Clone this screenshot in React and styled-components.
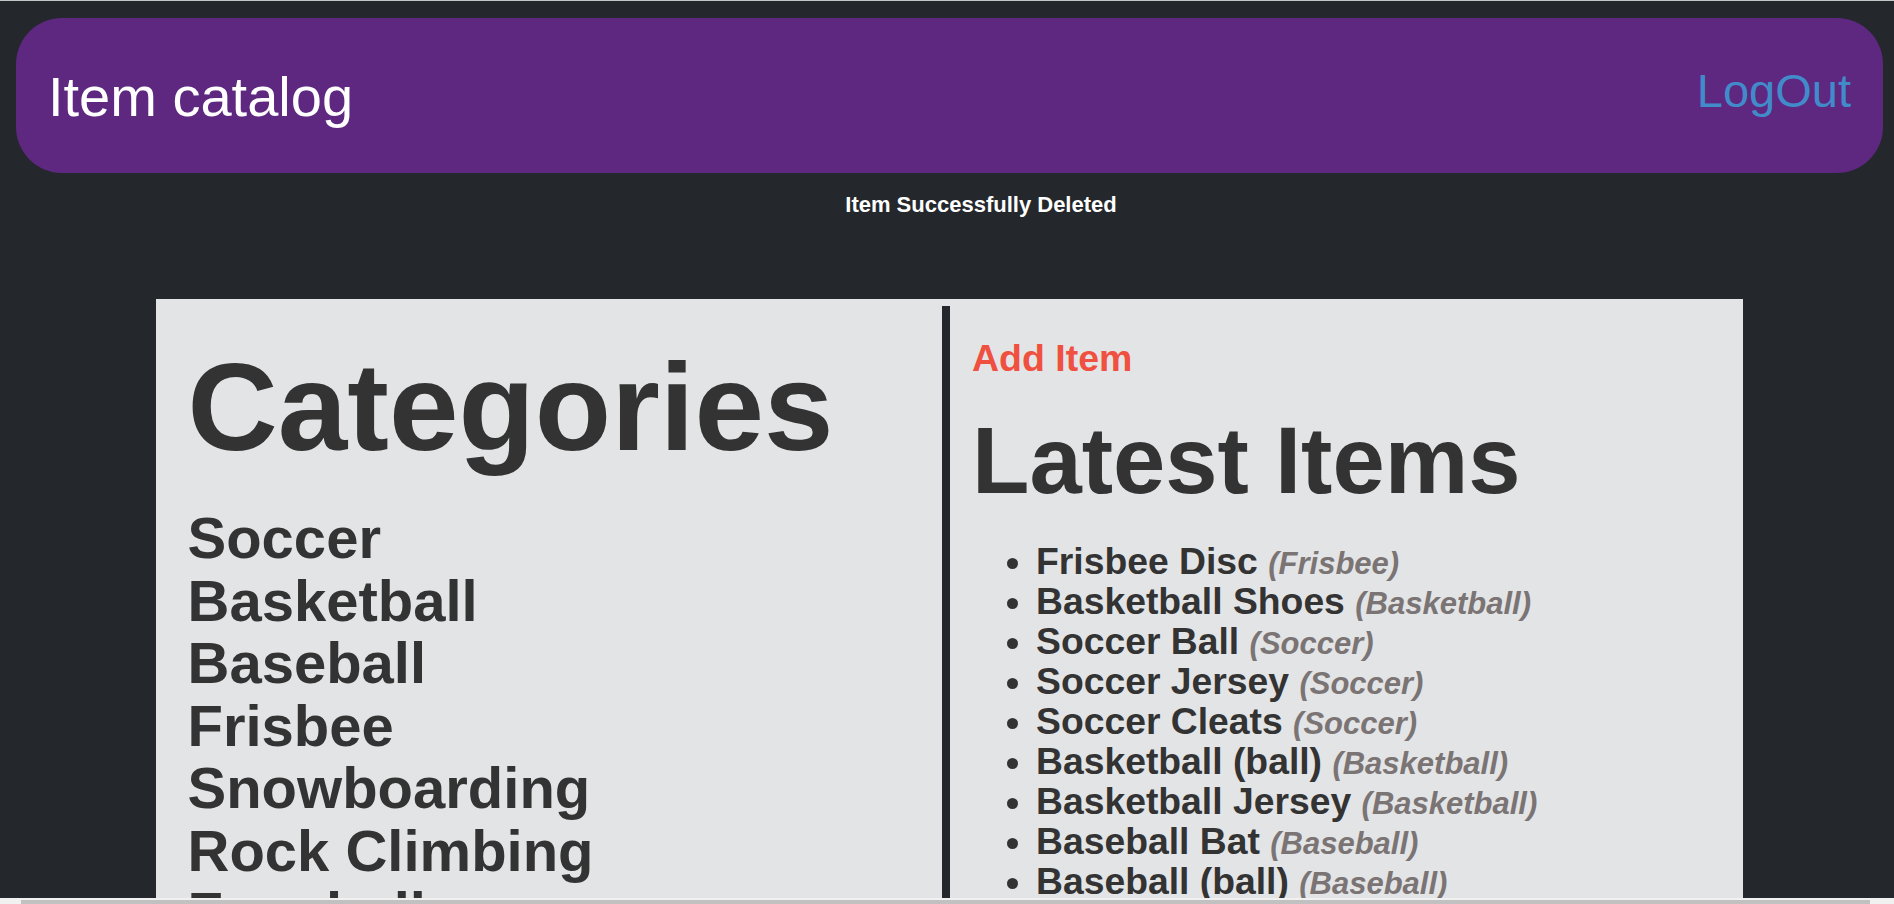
import React from "react";
import styled, { createGlobalStyle } from "styled-components";

const GlobalStyle = createGlobalStyle`
  html, body {
    margin: 0;
    padding: 0;
    background: #24282c;
    overflow: hidden;
  }
  body {
    font-family: "Liberation Sans", Arial, Helvetica, sans-serif;
  }
  * { box-sizing: border-box; }
`;

const Page = styled.div`
  min-height: 904px;
  border-top: 1px solid #c4c6c8;
  padding: 17px 11px 0 16px;
`;

const Header = styled.header`
  height: 155px;
  background: #5e2780;
  border-radius: 46px;
  display: flex;
  align-items: center;
  justify-content: space-between;
  padding: 0 32px 0 32px;
`;

const Brand = styled.div`
  color: #ffffff;
  font-size: 56px;
  line-height: 1;
  margin-top: 2px;
`;

const LogOut = styled.a`
  color: #428bca;
  font-size: 47px;
  line-height: 1;
  text-decoration: none;
  margin-bottom: 10px;
  cursor: pointer;
`;

const Flash = styled.div`
  margin-top: 19px;
  padding-left: 63px;
  text-align: center;
  color: #ffffff;
  font-weight: bold;
  font-size: 22px;
  line-height: 26px;
`;

const Panel = styled.main`
  width: 1587px;
  margin: 81px auto 0;
  background: #e3e4e6;
  padding-top: 7px;
  display: grid;
  grid-template-columns: 1fr 1fr;
  min-height: 700px;
  color: #333333;
`;

const Column = styled.section`
  padding: 31px 0 0 ${(p) => p.$inset}px;
  border-right: ${(p) => (p.$divider ? "8px solid #24282c" : "none")};
`;

const BigTitle = styled.h1`
  margin: 0;
  font-weight: bold;
  font-size: ${(p) => p.$size}px;
  line-height: ${(p) => p.$lh}px;
  margin-top: ${(p) => p.$mt || 0}px;
`;

const CategoryList = styled.div`
  margin-top: 30px;
  display: flex;
  flex-direction: column;
`;

const CategoryLink = styled.a`
  font-weight: bold;
  font-size: 58px;
  line-height: 62.5px;
  color: #333333;
  text-decoration: none;
`;

const AddLink = styled.a`
  display: block;
  color: #f05040;
  font-weight: bold;
  font-size: 37.5px;
  line-height: 42px;
  text-decoration: none;
`;

const ItemList = styled.ul`
  margin: 25.5px 0 0;
  padding-left: 64px;
  list-style: disc;
`;

const Item = styled.li`
  font-weight: bold;
  font-size: 37.3px;
  line-height: 40px;
`;

const ItemCategory = styled.span`
  font-style: italic;
  font-size: 31px;
  line-height: 30px;
  color: #7b7474;
`;

const ScrollTrack = styled.div`
  position: fixed;
  left: 0;
  right: 0;
  bottom: 0;
  height: 6px;
  background: #f1f1f1;
`;

const ScrollThumb = styled.div`
  position: absolute;
  left: 21px;
  right: 24px;
  top: 2px;
  bottom: 0;
  background: #c1c1c1;
`;

const categories = [
  "Soccer",
  "Basketball",
  "Baseball",
  "Frisbee",
  "Snowboarding",
  "Rock Climbing",
  "Foosball",
  "Skating",
  "Hockey",
];

const items = [
  ["Frisbee Disc", "Frisbee"],
  ["Basketball Shoes", "Basketball"],
  ["Soccer Ball", "Soccer"],
  ["Soccer Jersey", "Soccer"],
  ["Soccer Cleats", "Soccer"],
  ["Basketball (ball)", "Basketball"],
  ["Basketball Jersey", "Basketball"],
  ["Baseball Bat", "Baseball"],
  ["Baseball (ball)", "Baseball"],
  ["Snowboard", "Snowboarding"],
];

export default function App() {
  return (
    <>
      <GlobalStyle />
      <Page>
        <Header>
          <Brand>Item catalog</Brand>
          <LogOut>LogOut</LogOut>
        </Header>
        <Flash>Item Successfully Deleted</Flash>
        <Panel>
          <Column $inset={31.5} $divider>
            <BigTitle $size={125} $lh={140}>Categories</BigTitle>
            <CategoryList>
              {categories.map((c) => (
                <CategoryLink key={c}>{c}</CategoryLink>
              ))}
            </CategoryList>
          </Column>
          <Column $inset={22.5}>
            <AddLink>Add Item</AddLink>
            <BigTitle $size={94} $lh={108} $mt={28}>Latest Items</BigTitle>
            <ItemList>
              {items.map(([name, cat]) => (
                <Item key={name}>
                  {name} <ItemCategory>({cat})</ItemCategory>
                </Item>
              ))}
            </ItemList>
          </Column>
        </Panel>
      </Page>
      <ScrollTrack>
        <ScrollThumb />
      </ScrollTrack>
    </>
  );
}
